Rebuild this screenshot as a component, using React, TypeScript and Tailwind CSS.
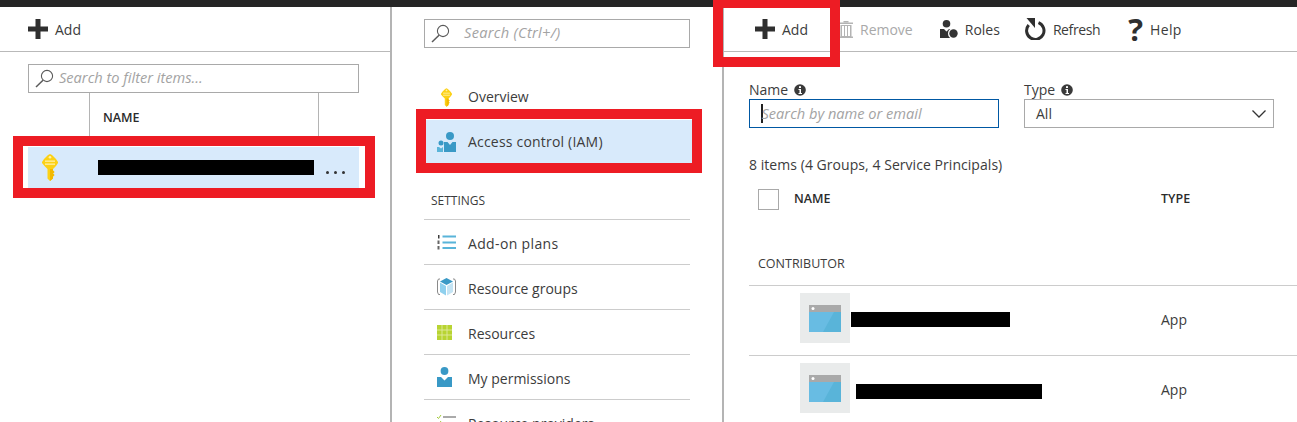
import React from "react";

const font = { fontFamily: '"Open Sans", "Noto Sans", sans-serif' };

function Plus() {
  return (
    <svg width="20" height="20" viewBox="0 0 20 20" className="shrink-0">
      <path d="M7.500 0h5v7.500H20v5h-7.500V20h-5v-7.500H0v-5h7.500z" fill="#2f2f2f" />
    </svg>
  );
}

function Magnifier() {
  return (
    <svg width="19" height="19" viewBox="0 0 19 19" className="shrink-0" fill="none" stroke="#5a5a5a">
      <circle cx="12" cy="7" r="5.600" strokeWidth="1.100" />
      <path d="M8 11.200L1 18" strokeWidth="1.500" />
    </svg>
  );
}

function Key({ w, h }: { w: number; h: number }) {
  return (
    <svg width={w} height={h} viewBox="0 0 16 27" className="shrink-0">
      <path d="M8 0l2 1 4 4 2 3v1l-2 3-3 3v1.500l1.500 1.500-1.500 1.500 1.500 1.500-1.500 1.500v2L8 27l-2.500-2.500V15l-3-3L0 9V8l2-3 4-4z" fill="#fcd116" />
      <circle cx="8" cy="3.200" r="1.300" fill="#fff1a6" />
      <rect x="3" y="6.500" width="10" height="1.300" fill="#fff1a6" />
      <rect x="3" y="9.500" width="10" height="1.300" fill="#fff1a6" />
      <path d="M8 15h3v1.500l1.500 1.500-1.500 1.500 1.500 1.500-1.500 1.500v2L8 27z" fill="#f2b900" />
    </svg>
  );
}

function IamIcon() {
  return (
    <svg width="20" height="20" viewBox="0 0 20 20" className="shrink-0">
      <circle cx="13" cy="4" r="4" fill="#3999c6" />
      <path d="M7 10h3.500L13 13l2.500-3H19v10H7z" fill="#3999c6" />
      <circle cx="4" cy="11" r="2.500" fill="#3999c6" />
      <path d="M0 15h2l2 1.500L6 15v5H0z" fill="#59b4d9" />
    </svg>
  );
}

function PlansIcon() {
  return (
    <svg width="19" height="15" viewBox="0 0 19 15" className="shrink-0">
      <rect x="1" y="0" width="1.500" height="3.500" fill="#3c3c3c" />
      <rect x="0.500" y="5.500" width="2" height="3.500" fill="#666" />
      <rect x="0.500" y="11" width="2" height="3.500" fill="#666" />
      <rect x="5.500" y="0.500" width="13.500" height="2" fill="#59b4d9" />
      <rect x="5.500" y="6.500" width="13.500" height="2" fill="#59b4d9" />
      <rect x="5.500" y="12" width="13.500" height="2" fill="#59b4d9" />
    </svg>
  );
}

function CubeIcon() {
  return (
    <svg width="19" height="18" viewBox="0 0 19 18" className="shrink-0">
      <path d="M3 1H1.500L.5 3v11l1 2.500H3M16 1h1.500l1 2v11l-1 2.500H16" fill="none" stroke="#8a8a8a" />
      <path d="M9.500 0L16 3.500 9.500 7 3 3.500z" fill="#3999c6" />
      <path d="M3 4.500L9 8v9.500L3 14z" fill="#8fd0ee" />
      <path d="M16 4.500L10 8v9.500L16 14z" fill="#c4e4f4" />
    </svg>
  );
}

function GridIcon() {
  return (
    <svg width="15" height="15" viewBox="0 0 15 15" className="shrink-0">
      <rect width="15" height="15" fill="#b8d432" />
      <path d="M5 0v15M10 0v15M0 5h15M0 10h15" stroke="#e0eb9e" strokeWidth="0.900" />
    </svg>
  );
}

function PermIcon() {
  return (
    <svg width="15" height="20" viewBox="0 0 15 20" className="shrink-0">
      <circle cx="7.500" cy="4" r="3.900" fill="#3999c6" />
      <path d="M0 10h4l3.500 3.500L11 10h4v10H0z" fill="#3999c6" />
    </svg>
  );
}

function ProvidersIcon() {
  return (
    <svg width="19" height="15" viewBox="0 0 19 15" className="shrink-0">
      <path d="M0 2l1.500 1.500L4 0" stroke="#a3c93a" fill="none" />
      <rect x="6" y="1" width="13" height="2" fill="#aaaaaa" />
      <path d="M0 8l1.500 1.500L4 6" stroke="#a3c93a" fill="none" />
    </svg>
  );
}

function TrashIcon() {
  return (
    <svg width="14" height="17" viewBox="0 0 14 17" className="shrink-0" fill="#b4b4b4">
      <rect x="4.500" y="0" width="5" height="1.500" />
      <rect x="0" y="1.500" width="14" height="1.500" />
      <path d="M1.500 4h11v11.500H14V17H0v-1.500h1.500zM3 5v10h2V5zm3 0v10h2V5zm3 0v10h2V5z" fillRule="evenodd" />
    </svg>
  );
}

function RolesIcon() {
  return (
    <svg width="18" height="18" viewBox="0 0 18 18" className="shrink-0">
      <circle cx="6.500" cy="3.800" r="3.800" fill="#333" />
      <path d="M0 9h4l2.500 2.500L9 9h2v9H0z" fill="#333" />
      <circle cx="13.500" cy="13.500" r="5.500" fill="#fff" />
      <circle cx="13.500" cy="13.500" r="4.200" fill="#333" />
    </svg>
  );
}

function RefreshIcon() {
  return (
    <svg width="21" height="22" viewBox="0 0 21 22" className="shrink-0" fill="none">
      <path d="M13.500 4.600a8.700 8.700 0 1 1-9.800 2.400" stroke="#2f2f2f" strokeWidth="3" />
      <path d="M1.500 0h8.500v10z" fill="#2f2f2f" />
    </svg>
  );
}

function Info() {
  return (
    <svg width="12" height="12" viewBox="0 0 12 12" className="shrink-0">
      <circle cx="6" cy="6" r="5.800" fill="#3a3a3a" />
      <rect x="5" y="2.200" width="2" height="1.800" fill="#fff" />
      <path d="M4.500 5h2.500v4H8v1H4.500V9h1V6h-1z" fill="#fff" />
    </svg>
  );
}

function Chevron() {
  return (
    <svg width="14" height="8" viewBox="0 0 14 8" className="shrink-0" fill="none">
      <path d="M.5.500L7 7 13.500.500" stroke="#333" strokeWidth="1.300" />
    </svg>
  );
}

function WindowIcon() {
  return (
    <div className="flex h-[50px] w-[50px] shrink-0 items-center justify-center bg-[#e9ebeb]">
      <svg width="32" height="27" viewBox="0 0 32 27">
        <rect width="32" height="7" fill="#a9a9a9" />
        <circle cx="4" cy="3.500" r="1.500" fill="#fff" />
        <rect y="7" width="32" height="20" fill="#68bce3" />
        <path d="M32 7v20H14L25 7z" fill="#59b4d9" />
      </svg>
    </div>
  );
}

function SearchBox({ text, gap, className }: { text: string; gap: string; className: string }) {
  return (
    <div className={`flex h-[29px] items-center border border-[#a9a9a9] pl-[6px] ${className}`}>
      <Magnifier />
      <span className={`mb-[2px] text-[14.600px] italic text-[#a3a3a3] ${gap}`}>{text}</span>
    </div>
  );
}

function NavRow({ icon, label, wide }: { icon: React.ReactNode; label: string; wide?: boolean }) {
  return (
    <div className="flex h-[45px] w-[266px] shrink-0 items-center border-b border-[#cccccc] text-[14px] text-[#3c3c3c]">
      <div className="flex w-[44px] justify-start pl-[13px]">{icon}</div>
      <span className={`mt-[3px] ${wide ? "tracking-[0.35px]" : ""}`}>{label}</span>
    </div>
  );
}

function ToolItem({
  icon,
  label,
  className,
  muted,
  textClass,
}: {
  icon: React.ReactNode;
  label: string;
  className: string;
  muted?: boolean;
  textClass?: string;
}) {
  return (
    <div className={`flex items-center gap-[7px] ${className}`}>
      {icon}
      <span className={`text-[14px] ${muted ? "text-[#a9a9a9]" : "text-[#3c3c3c]"} ${textClass ?? ""}`}>{label}</span>
    </div>
  );
}

function PersonRow({ barClass }: { barClass: string }) {
  return (
    <div className="ml-[25px] flex h-[70px] items-start border-b border-[#cccccc] pt-[7px]">
      <div className="flex w-[412px] items-start pl-[51px]">
        <WindowIcon />
        <div className={`h-[15px] bg-black ${barClass}`} />
      </div>
      <span className="mt-[17px] text-[14px] leading-[20px] text-[#3c3c3c]">App</span>
    </div>
  );
}

export default function App() {
  return (
    <div className="relative h-[422px] w-[1297px] overflow-hidden bg-white" style={font}>
      <div className="h-[7px] bg-[#252525]" />
      <div className="flex h-[415px]">
        {/* Left blade */}
        <div className="w-[392px] shrink-0 border-r-2 border-[#b4b4b4]">
          <div className="flex h-[45px] items-center border-b border-[#b9b9b9] pl-[28px]">
            <ToolItem icon={<Plus />} label="Add" className="gap-[6px]" />
          </div>
          <SearchBox
            text="Search to filter items..."
            gap="ml-[5px]"
            className="ml-[28px] mt-[12px] w-[331px]"
          />
          <div className="ml-[89px] flex h-[44px] w-[230px] items-center border-x border-[#b4b4b4] pl-[13px] pt-[7px] text-[12.500px] font-semibold text-[#2b2b2b]">
            NAME
          </div>
          <div className="ml-[28px] mt-[10px] flex h-[42px] w-[331px] items-center bg-[#d8eafb] pb-[1px] pl-[14px]">
            <Key w={16} h={27} />
            <div className="ml-[40px] h-[15px] w-[216px] bg-black" />
            <div className="ml-[12px] mt-[9px] flex gap-[5px]">
              <div className="h-[3px] w-[3px] rounded-full bg-[#333]" />
              <div className="h-[3px] w-[3px] rounded-full bg-[#333]" />
              <div className="h-[3px] w-[3px] rounded-full bg-[#333]" />
            </div>
          </div>
        </div>

        {/* Middle blade */}
        <div className="w-[332px] shrink-0 border-r-2 border-[#b4b4b4] pt-[12px]">
          <SearchBox text="Search (Ctrl+/)" gap="ml-[14px] tracking-[0.3px]" className="ml-[32px] w-[266px]" />
          <div className="ml-[32px] mt-[27px] flex h-[45px] w-[266px] items-center text-[14px] text-[#3c3c3c]">
            <div className="flex w-[44px] pl-[17px]">
              <Key w={11} h={19} />
            </div>
            <span className="mb-[2px]">Overview</span>
          </div>
          <div className="ml-[34px] flex h-[43px] w-[266px] items-center bg-[#d8eafb] pl-[11px] text-[14px] text-[#3c3c3c]">
            <IamIcon />
            <span className="ml-[11px] tracking-[0.2px]">Access control (IAM)</span>
          </div>
          <div className="ml-[32px] flex h-[57px] w-[266px] items-center border-b border-[#cccccc] pl-[7px] pt-[20px] text-[12px] text-[#3c3c3c]">
            SETTINGS
          </div>
          <div className="ml-[32px]">
            <NavRow icon={<PlansIcon />} label="Add-on plans" wide />
            <NavRow icon={<CubeIcon />} label="Resource groups" />
            <NavRow icon={<GridIcon />} label="Resources" />
            <NavRow icon={<PermIcon />} label="My permissions" />
            <NavRow icon={<ProvidersIcon />} label="Resource providers" />
          </div>
        </div>

        {/* Right blade */}
        <div className="min-w-0 flex-1">
          <div className="flex h-[45px] items-center border-b border-[#b9b9b9] pl-[31px]">
            <ToolItem icon={<Plus />} label="Add" />
            <ToolItem icon={<TrashIcon />} label="Remove" muted className="ml-[31px] gap-[6px]" />
            <ToolItem icon={<RolesIcon />} label="Roles" className="ml-[27px]" />
            <ToolItem icon={<RefreshIcon />} label="Refresh" className="ml-[25px] gap-[6px]" textClass="tracking-[-0.4px]" />
            <ToolItem
              icon={<span className="text-[31px] font-bold leading-none text-[#2f2f2f]">?</span>}
              label="Help"
              className="ml-[28px] gap-[7px]"
              textClass="tracking-[0.4px]"
            />
          </div>

          <div className="ml-[25px] mt-[28px] flex gap-[25px]">
            <div className="w-[250px]">
              <div className="flex h-[19px] items-center gap-[6px] text-[14px] text-[#3c3c3c]">
                Name <Info />
              </div>
              <div className="flex h-[29px] items-center border border-[#0058a3] pl-[11px]">
                <div className="h-[19px] w-[1.500px] shrink-0 bg-[#222]" />
                <span className="ml-[-1px] text-[14.600px] italic text-[#a3a3a3]">Search by name or email</span>
              </div>
            </div>
            <div className="w-[250px]">
              <div className="flex h-[19px] items-center gap-[6px] text-[14px] text-[#3c3c3c]">
                Type <Info />
              </div>
              <div className="flex h-[29px] items-center justify-between border border-[#a9a9a9] pl-[11px] pr-[7px] text-[14px] text-[#3c3c3c]">
                All
                <Chevron />
              </div>
            </div>
          </div>

          <div className="ml-[25px] mt-[27px] h-[20px] text-[14px] leading-[20px] tracking-[0.05px] text-[#3c3c3c]">
            8 items (4 Groups, 4 Service Principals)
          </div>

          <div className="ml-[34px] mt-[14px] flex h-[21px] items-center text-[12.500px] font-semibold text-[#2b2b2b]">
            <div className="h-[21px] w-[21px] border border-[#a9a9a9]" />
            <span className="ml-[15px] w-[367px]">NAME</span>
            <span>TYPE</span>
          </div>

          <div className="ml-[34px] mt-[43px] h-[22px] text-[12.500px] leading-[22px] text-[#3c3c3c]">
            CONTRIBUTOR
          </div>
          <div className="ml-[25px] mt-[10px] border-b border-[#cccccc]" />
          <PersonRow barClass="ml-[1px] mt-[19px] w-[159px]" />
          <PersonRow barClass="ml-[6px] mt-[21px] w-[186px]" />
        </div>
      </div>

      {/* Red annotation frames drawn over the page */}
      <div className="absolute left-[13px] top-[136px] h-[62px] w-[362px] border-[10px] border-[#ed1c24]" />
      <div className="absolute left-[416px] top-[109px] h-[64px] w-[286px] border-[10px] border-[#ed1c24]" />
      <div className="absolute left-[713px] top-0 h-[67px] w-[127px] border-[10px] border-t-[8px] border-[#ed1c24]" />
    </div>
  );
}
